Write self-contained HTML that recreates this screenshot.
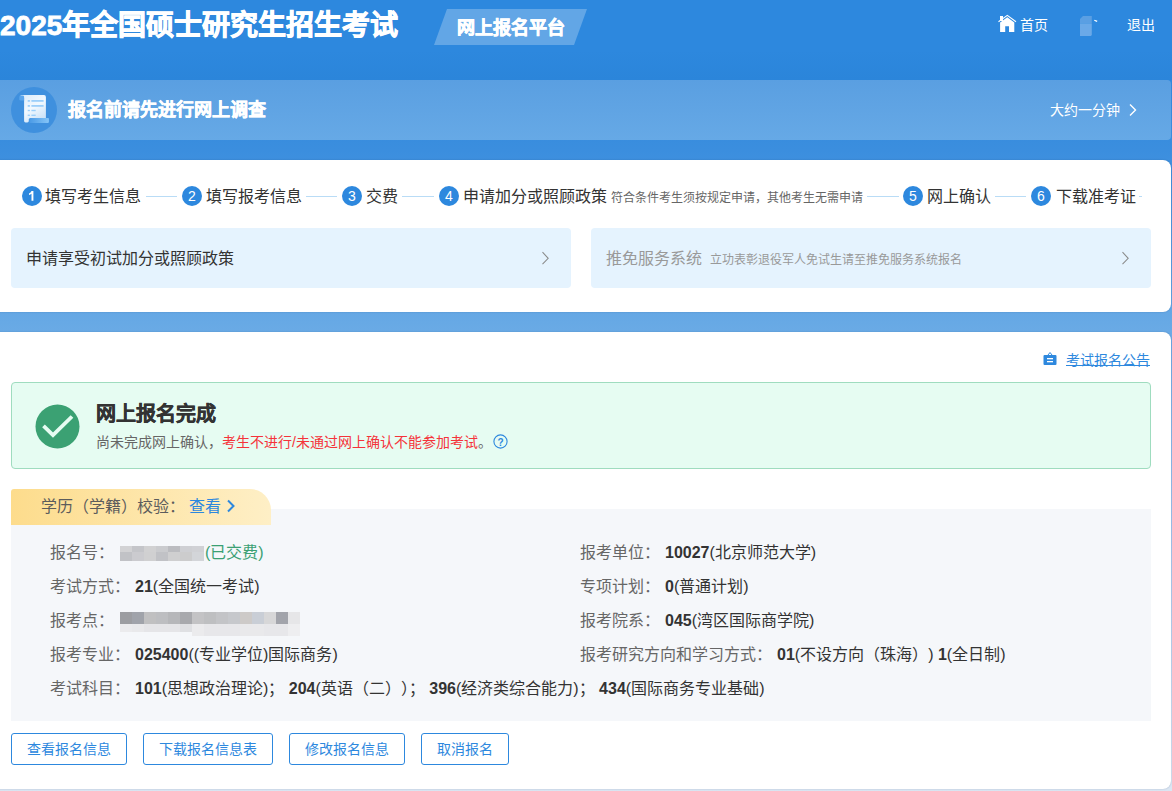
<!DOCTYPE html>
<html lang="zh-CN"><head><meta charset="utf-8">
<style>
*{box-sizing:border-box;margin:0;padding:0;text-spacing-trim:space-all}
html,body{width:1172px;height:791px;overflow:hidden}
body{position:relative;font-family:"Liberation Sans",sans-serif;color:#333;
background:linear-gradient(180deg,#2c87dd 0px,#2e88dd 80px,#3b8ede 150px,#67a9e5 322px,#a9c9ee 560px,#dbe6f3 791px);}
.abs{position:absolute;white-space:nowrap}
.hdr{position:absolute;left:0;top:0;width:1172px;height:80px;background:linear-gradient(180deg,#2d88de 0,#2d88de 50px,#2b85da 80px)}
.title{left:0;top:8px;font-size:28px;line-height:36px;font-weight:bold;color:#fff;-webkit-text-stroke:0.8px #fff}
.tag{left:434px;top:9px;width:153px;height:36px;background:#62a6e6;clip-path:polygon(13px 0,153px 0,140px 36px,0 36px)}
.tagt{left:457px;top:15px;font-size:18px;line-height:26px;font-weight:bold;color:#fff;-webkit-text-stroke:0.6px #fff}
.nav{font-size:14px;line-height:20px;color:#fff}
.banner{left:0;top:80px;width:1171px;height:60px;background:linear-gradient(180deg,#5a9fe1,#66a9e6);border-radius:0 4px 4px 0}
.bcirc{left:11px;top:87px;width:46px;height:46px;border-radius:50%;background:#3f90de}
.btxt{left:68px;top:98px;font-size:18px;line-height:24px;font-weight:bold;color:#fff;-webkit-text-stroke:0.5px #fff}
.card{left:-10px;width:1181px;background:#fff;border-radius:8px;box-shadow:0 0 1.5px rgba(0,40,90,.3)}
.step{font-size:16px;line-height:22px;color:#333}
.num{width:20px;height:20px;border-radius:50%;background:#2d88de;color:#fff;font-size:14px;line-height:20px;text-align:center}
.line{height:1px;background:#b9dcf6}
.opt{top:228px;height:60px;width:560px;background:#e5f3fe;border-radius:4px}
.info{left:11px;top:509px;width:1140px;height:212px;background:#f5f7fa}
.lbl{font-size:16px;line-height:22px;color:#666}
.val{font-size:16px;line-height:22px;color:#333}
.val b{font-weight:bold}
.btn{top:733px;height:32px;border:1px solid #2d88de;border-radius:3px;color:#2d88de;font-size:14px;line-height:30px;text-align:center}
</style></head><body>
<div class="hdr"></div>
<div class="abs title">2025年全国硕士研究生招生考试</div>
<div class="abs tag"></div>
<div class="abs tagt">网上报名平台</div>

<!-- nav -->
<svg class="abs" style="left:994px;top:10px" width="28" height="26" viewBox="0 0 28 26"><rect x="6" y="6" width="3" height="5" fill="#fff"/><polyline points="4.5,11.7 13.3,5.4 22,11.7" fill="none" stroke="#fff" stroke-width="1.15"/><polygon points="6.1,12.6 13.3,7.2 20.3,12.6 20.3,22 15,22 15,16.2 11.2,16.2 11.2,22 6.1,22" fill="#fff"/></svg>
<div class="abs nav" style="left:1020px;top:15px">首页</div>
<svg class="abs" style="left:1072px;top:10px" width="32" height="30" viewBox="0 0 32 30"><path d="M8 9 L11 6 L19.8 6 L19.8 13.5 L8 13.5 Z" fill="#5a9fe3"/><path d="M8 13.5 L19.8 13.5 L19.8 25 L18.8 26 L8 26 Z" fill="#6aa9e8"/><path d="M22.3 10.2 L25.2 11.4" stroke="#fff" stroke-width="1.2"/></svg>
<div class="abs nav" style="left:1127px;top:15px">退出</div>

<!-- banner -->
<div class="abs banner"></div>
<div class="abs bcirc"></div>
<svg class="abs" style="left:14px;top:90px" width="40" height="40" viewBox="0 0 40 40">
<defs><linearGradient id="pg" x1="0" y1="0" x2="0.6" y2="1"><stop offset="0" stop-color="#d9eafa"/><stop offset="0.55" stop-color="#f2f9ff"/><stop offset="1" stop-color="#cfe4f8"/></linearGradient>
<linearGradient id="rg" x1="0" y1="0" x2="1" y2="0"><stop offset="0" stop-color="#4a9ae6"/><stop offset="1" stop-color="#86c5f7"/></linearGradient></defs>
<path d="M6 5.1 H30 Q31.9 5.1 31.9 7 V29 H14.8 V31 Q14.8 32.4 13.4 32.4 H11.5 Q10.1 32.4 10.1 31 V8 Q10.1 6.6 8.5 6.6 Z" fill="url(#pg)"/>
<rect x="15.2" y="28" width="19.7" height="4.9" rx="0.8" fill="url(#rg)"/>
<path d="M5.3 7 Q5.3 5.6 6.8 5.6 H8.6 Q10.1 5.6 10.1 7 V10.6 H6.8 Q5.3 10.6 5.3 9.2 Z" fill="#5aa5ec"/>
<g fill="#9ccffa"><rect x="13.7" y="10" width="2.2" height="1.8"/><rect x="17.4" y="10" width="12.2" height="1.8"/><rect x="13.7" y="15" width="2.2" height="1.8"/><rect x="17.4" y="15" width="12.2" height="1.8"/><rect x="13.7" y="19.8" width="2.2" height="1.4"/><rect x="17.4" y="19.8" width="4.3" height="1.4"/><rect x="13.7" y="24.6" width="2.2" height="1.4"/><rect x="17.4" y="24.6" width="4.3" height="1.4"/></g>
</svg>
<div class="abs btxt">报名前请先进行网上调查</div>
<div class="abs nav" style="left:1050px;top:100px">大约一分钟</div>
<svg class="abs" style="left:1128px;top:103px" width="10" height="14" viewBox="0 0 10 14"><path d="M2 1.5 L7.5 7 L2 12.5" fill="none" stroke="#fff" stroke-width="1.4"/></svg>

<!-- card 1 -->
<div class="abs card" style="top:160px;height:152px"></div>
<div class="abs num" style="left:22px;top:186px"><svg style="position:absolute;left:0;top:0" width="20" height="20" viewBox="0 0 20 20"><path d="M9.5 5 H11.4 V14.8 H9.5 V7.8 Q8.4 8.6 7 8.9 V7.6 Q8.9 6.9 9.5 5 Z" fill="#fff"/></svg></div>
<div class="abs step" style="left:45px;top:186px">填写考生信息</div>
<div class="abs line" style="left:146px;top:196px;width:31px"></div>
<div class="abs num" style="left:182px;top:186px">2</div>
<div class="abs step" style="left:206px;top:186px">填写报考信息</div>
<div class="abs line" style="left:306px;top:196px;width:31px"></div>
<div class="abs num" style="left:342px;top:186px">3</div>
<div class="abs step" style="left:366px;top:186px">交费</div>
<div class="abs line" style="left:402px;top:196px;width:32px"></div>
<div class="abs num" style="left:439px;top:186px">4</div>
<div class="abs step" style="left:463px;top:186px">申请加分或照顾政策 <span style="font-size:12px;color:#666">符合条件考生须按规定申请，其他考生无需申请</span></div>
<div class="abs line" style="left:867px;top:196px;width:32px"></div>
<div class="abs num" style="left:903px;top:186px">5</div>
<div class="abs step" style="left:927px;top:186px">网上确认</div>
<div class="abs line" style="left:995px;top:196px;width:31px"></div>
<div class="abs num" style="left:1031px;top:186px">6</div>
<div class="abs step" style="left:1056px;top:186px">下载准考证</div>
<div class="abs line" style="left:1139px;top:196px;width:3px"></div>

<div class="abs opt" style="left:11px"></div>
<div class="abs step" style="left:26px;top:248px">申请享受初试加分或照顾政策</div>
<svg class="abs" style="left:540px;top:251px" width="10" height="16" viewBox="0 0 10 16"><path d="M2.5 1.2 L8.2 7.3 L2.5 13.1" fill="none" stroke="#8a8a8a" stroke-width="1.05"/></svg>
<div class="abs opt" style="left:591px"></div>
<div class="abs step" style="left:606px;top:248px;color:#999">推免服务系统 <span style="font-size:12px;color:#999;margin-left:4px">立功表彰退役军人免试生请至推免服务系统报名</span></div>
<svg class="abs" style="left:1120px;top:251px" width="10" height="16" viewBox="0 0 10 16"><path d="M2.5 1.2 L8.2 7.3 L2.5 13.1" fill="none" stroke="#8a8a8a" stroke-width="1.05"/></svg>

<!-- card 2 -->
<div class="abs card" style="top:332px;height:457px"></div>
<svg class="abs" style="left:1043px;top:352px" width="14" height="13" viewBox="0 0 14 13"><path d="M5 3 L7 0.5 L9 3" fill="none" stroke="#2d88de" stroke-width="1"/><rect x="0.5" y="3" width="13" height="10" rx="1" fill="#2d88de"/><rect x="4" y="6" width="6" height="1.3" fill="#fff"/><rect x="4" y="9" width="6" height="1.3" fill="#fff"/></svg>
<div class="abs" style="left:1066px;top:350px;font-size:14px;text-underline-offset:0px;line-height:20px;color:#2d88de;text-decoration:underline">考试报名公告</div>

<div class="abs" style="left:11px;top:382px;width:1140px;height:87px;background:#e6fcf2;border:1px solid #9fdcbf;border-radius:4px"></div>
<svg class="abs" style="left:35px;top:404px" width="45" height="45" viewBox="0 0 45 45"><circle cx="22.5" cy="22.5" r="22" fill="#3ba173"/><path d="M8.5 21.8 L18 31 L37 12.5" fill="none" stroke="#e6fcf2" stroke-width="3.8"/></svg>
<div class="abs" style="left:96px;top:401px;font-size:20px;line-height:26px;font-weight:bold;color:#333;-webkit-text-stroke:0.4px #333">网上报名完成</div>
<div class="abs" style="left:96px;top:432px;font-size:14px;line-height:20px;color:#666">尚未完成网上确认，<span style="color:#f5333a">考生不进行/未通过网上确认不能参加考试</span>。</div>
<svg class="abs" style="left:493px;top:434px" width="15" height="15" viewBox="0 0 15 15"><circle cx="7.5" cy="7.5" r="6.6" fill="none" stroke="#2d88de" stroke-width="1.1"/><text x="7.5" y="11.6" font-size="10" font-weight="bold" text-anchor="middle" fill="#2d88de" font-family="Liberation Sans">?</text></svg>

<div class="abs info"></div>
<div class="abs" style="left:11px;top:489px;width:260px;height:36px;border-radius:3px 21px 0 0;background:linear-gradient(90deg,#fddc8c,#feefc6)"></div>
<div class="abs lbl" style="left:41px;top:496px;color:#5c5c5c">学历（学籍）校验：<span style="color:#2d88de;margin-left:4px">查看</span></div>
<svg class="abs" style="left:226px;top:499px" width="10" height="14" viewBox="0 0 10 14"><path d="M2 1.5 L7.5 7 L2 12.5" fill="none" stroke="#2d88de" stroke-width="2"/></svg>

<!-- rows -->
<div class="abs lbl" style="left:50px;top:542px">报名号：</div>
<div class="abs" style="left:120px;top:546px;width:12px;height:6px;background:#d2d2d4"></div><div class="abs" style="left:132px;top:546px;width:12px;height:6px;background:#c4c5c9"></div><div class="abs" style="left:144px;top:546px;width:12px;height:6px;background:#d1d1d2"></div><div class="abs" style="left:156px;top:546px;width:12px;height:6px;background:#cacbce"></div><div class="abs" style="left:168px;top:546px;width:12px;height:6px;background:#bbbcc0"></div><div class="abs" style="left:180px;top:546px;width:12px;height:6px;background:#cecfd3"></div><div class="abs" style="left:192px;top:546px;width:12px;height:6px;background:#d0d1d5"></div><div class="abs" style="left:120px;top:552px;width:12px;height:9px;background:#c1c2c6"></div><div class="abs" style="left:132px;top:552px;width:12px;height:9px;background:#cbcbcf"></div><div class="abs" style="left:144px;top:552px;width:12px;height:9px;background:#d0d0d1"></div><div class="abs" style="left:156px;top:552px;width:12px;height:9px;background:#c1c2c6"></div><div class="abs" style="left:168px;top:552px;width:12px;height:9px;background:#cfcfd0"></div><div class="abs" style="left:180px;top:552px;width:12px;height:9px;background:#cccccd"></div><div class="abs" style="left:192px;top:552px;width:12px;height:9px;background:#d3d5d9"></div>
<div class="abs val" style="left:205px;top:542px;color:#3aa073">(已交费)</div>
<div class="abs lbl" style="left:50px;top:576px">考试方式：</div>
<div class="abs val" style="left:135px;top:576px"><b>21</b>(全国统一考试)</div>
<div class="abs lbl" style="left:50px;top:610px">报考点：</div>
<div class="abs" style="left:120px;top:612px;width:12px;height:12px;background:#9c9da1"></div><div class="abs" style="left:132px;top:612px;width:12px;height:12px;background:#a0a3aa"></div><div class="abs" style="left:144px;top:612px;width:12px;height:12px;background:#c0c0c1"></div><div class="abs" style="left:156px;top:612px;width:12px;height:12px;background:#bdbec1"></div><div class="abs" style="left:168px;top:612px;width:12px;height:12px;background:#b6b7ba"></div><div class="abs" style="left:180px;top:612px;width:12px;height:12px;background:#a8a9ad"></div><div class="abs" style="left:192px;top:612px;width:12px;height:12px;background:#c3c3c5"></div><div class="abs" style="left:204px;top:612px;width:12px;height:12px;background:#bebfc1"></div><div class="abs" style="left:216px;top:612px;width:12px;height:12px;background:#c3c4c7"></div><div class="abs" style="left:228px;top:612px;width:12px;height:12px;background:#c6c8cc"></div><div class="abs" style="left:240px;top:612px;width:12px;height:12px;background:#cdcac8"></div><div class="abs" style="left:252px;top:612px;width:12px;height:12px;background:#c9ced6"></div><div class="abs" style="left:264px;top:612px;width:12px;height:12px;background:#d7d7d8"></div><div class="abs" style="left:276px;top:612px;width:12px;height:12px;background:#a2a4ab"></div><div class="abs" style="left:288px;top:612px;width:12px;height:12px;background:#e6e6e8"></div><div class="abs" style="left:120px;top:624px;width:12px;height:8px;background:#ebebed"></div><div class="abs" style="left:132px;top:624px;width:12px;height:8px;background:#e9e9eb"></div><div class="abs" style="left:144px;top:624px;width:12px;height:8px;background:#e5e5e8"></div><div class="abs" style="left:156px;top:624px;width:12px;height:8px;background:#e5e5e8"></div><div class="abs" style="left:168px;top:624px;width:12px;height:8px;background:#e5e5e8"></div><div class="abs" style="left:180px;top:624px;width:12px;height:8px;background:#dfe0e3"></div><div class="abs" style="left:192px;top:624px;width:12px;height:12px;background:#ebebed"></div><div class="abs" style="left:204px;top:624px;width:12px;height:12px;background:#e7e7ea"></div><div class="abs" style="left:216px;top:624px;width:12px;height:12px;background:#e7e7ea"></div><div class="abs" style="left:228px;top:624px;width:12px;height:12px;background:#e7e7ea"></div><div class="abs" style="left:240px;top:624px;width:12px;height:12px;background:#e9e9eb"></div><div class="abs" style="left:252px;top:624px;width:12px;height:12px;background:#e9e9eb"></div><div class="abs" style="left:264px;top:624px;width:12px;height:12px;background:#e7e7ea"></div><div class="abs" style="left:276px;top:624px;width:12px;height:12px;background:#e7e7ea"></div><div class="abs" style="left:288px;top:624px;width:12px;height:12px;background:#eeeef0"></div>
<div class="abs lbl" style="left:50px;top:644px">报考专业：</div>
<div class="abs val" style="left:135px;top:644px"><b>025400</b>((专业学位)国际商务)</div>
<div class="abs lbl" style="left:50px;top:678px">考试科目：</div>
<div class="abs val" style="left:135px;top:678px"><b>101</b>(思想政治理论)； <b>204</b>(英语（二）<span style="letter-spacing:-8px">）</span>； <b>396</b>(经济类综合能力)； <b>434</b>(国际商务专业基础)</div>

<div class="abs lbl" style="left:580px;top:542px">报考单位：</div>
<div class="abs val" style="left:665px;top:542px"><b>10027</b>(北京师范大学)</div>
<div class="abs lbl" style="left:580px;top:576px">专项计划：</div>
<div class="abs val" style="left:665px;top:576px"><b>0</b>(普通计划)</div>
<div class="abs lbl" style="left:580px;top:610px">报考院系：</div>
<div class="abs val" style="left:665px;top:610px"><b>045</b>(湾区国际商学院)</div>
<div class="abs lbl" style="left:580px;top:644px">报考研究方向和学习方式：</div>
<div class="abs val" style="left:777px;top:644px"><b>01</b>(不设方向（珠海）) <b>1</b>(全日制)</div>

<div class="abs btn" style="left:11px;width:116px">查看报名信息</div>
<div class="abs btn" style="left:143px;width:130px">下载报名信息表</div>
<div class="abs btn" style="left:289px;width:116px">修改报名信息</div>
<div class="abs btn" style="left:421px;width:88px">取消报名</div>
</body></html>
